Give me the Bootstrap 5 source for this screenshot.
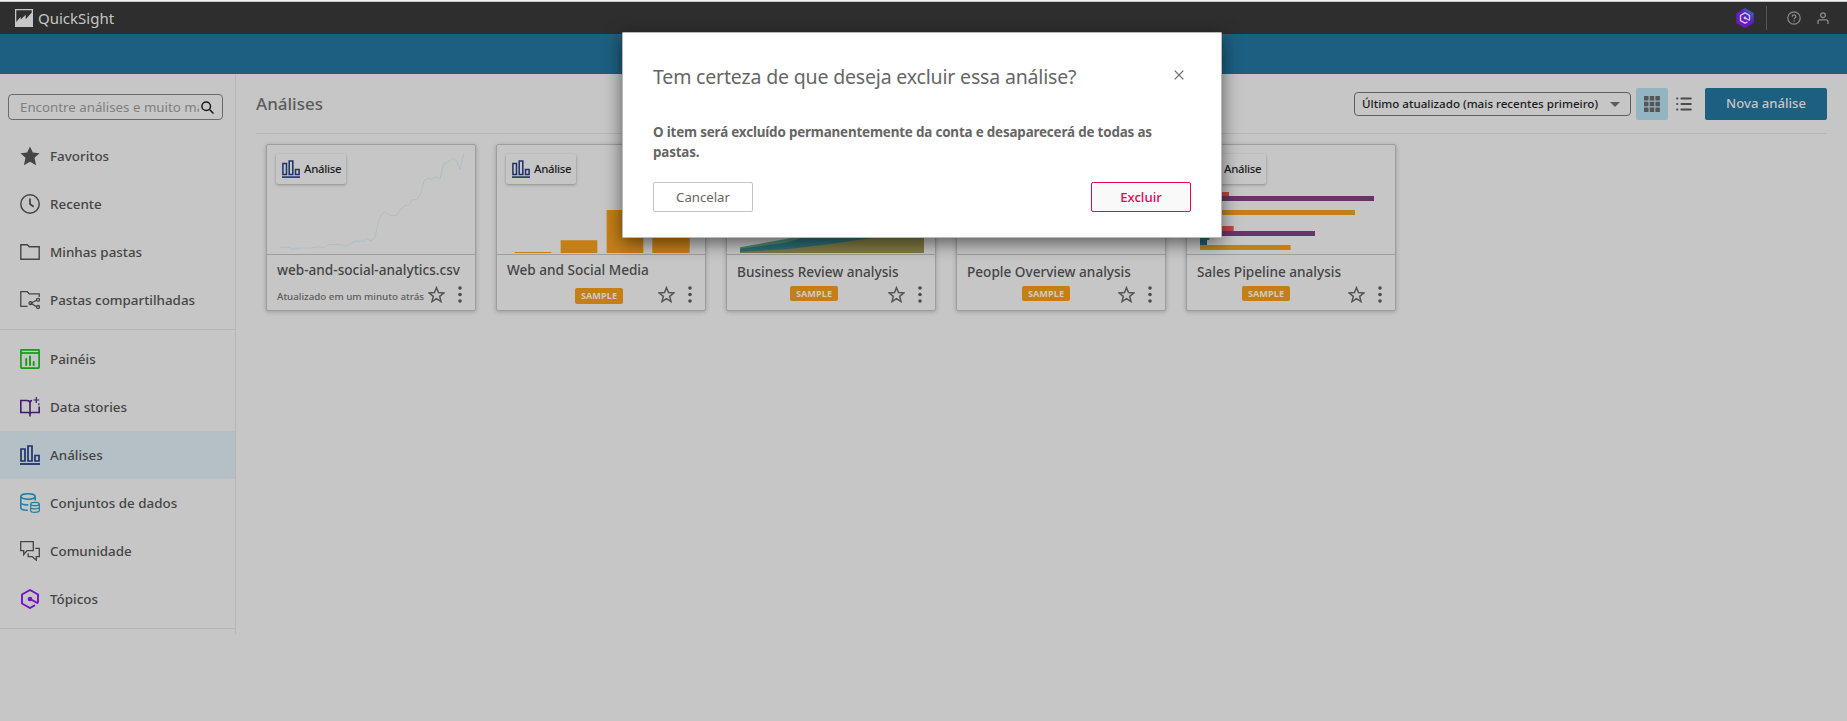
<!DOCTYPE html>
<html lang="pt-BR">
<head>
<meta charset="utf-8">
<meta name="viewport" content="width=device-width, initial-scale=1">
<title>QuickSight</title>
<link href="https://cdn.jsdelivr.net/npm/bootstrap@5.3.0/dist/css/bootstrap.min.css" rel="stylesheet">
<style>
html{overflow:hidden}
body{background:#c6c6c6;color:#454545;font-family:"Noto Sans","Open Sans",sans-serif;font-size:13.4px;height:721px;overflow:hidden}
svg{display:block;flex:none}
.topline{height:2px;background:linear-gradient(#f4f4f4 50%,#c6c6c6 50%)}
.topbar{height:32px;background:#2e2e2e;color:#c6c6c6;padding:0 18px 0 15px}
.brand{font-size:15px;line-height:32px;margin-left:5px}
.vsep{width:1px;height:24px;background:#555;margin:0 20px 0 12px}
.bluebar{height:40px;background:#1d5f80}
.side{width:236px;height:560px;border-right:1px solid #b7b7b7;padding-top:20px}
.search{width:215px;height:26px;margin:0 0 12px 8px;border:1px solid #6b6b6b;border-radius:4px;padding:0 9px 0 11px}
.search input{width:179px;height:24px;border:0;padding:0;margin-right:2px;background:transparent;outline:0;font-size:13.3px}
.search input::placeholder{color:#808080;opacity:1}
.item{height:48px;padding-left:20px;font-weight:500;color:#454545;text-decoration:none;white-space:nowrap}
.item span{margin-left:10px}
.item.active{background:#b5bfc6}
.rule{height:1px;background:#b5b5b5;margin:5px 0}
.main{padding:14px 20px 0 20px}
.head{height:32px;margin-bottom:13px}
h1{font-size:17px;font-weight:500;color:#5c5c5c;margin:0}
.sel{width:277px;height:24px;border:1px solid #5f5f5f;border-radius:4px;font-size:11.6px;font-weight:500;color:#1c1c1c;padding:0 10px 0 7px;white-space:nowrap}
.tog{width:32px;height:32px;border-radius:2px;margin-left:5px}
.tog.on{background:#93b5c1}
.newbtn{width:122px;height:32px;margin-left:5px;background:#1d5f80;color:#c6c6c6;border-radius:2px;font-weight:500;font-size:13.1px;line-height:30px;border:0;padding:0 0 2px}
.cards{padding:10px 0 0 10px;gap:20px}
.tile{width:210px;height:167px;border:1px solid #9d9d9d;border-radius:2px;box-shadow:0 1px 4px rgba(0,0,0,.22);position:relative;background:#c6c6c6}
.thumb{height:110px;border-bottom:1px solid #9d9d9d}
.chip{position:absolute;left:9px;top:9px;width:70px;height:30px;padding-left:6px;background:#c6c6c6;box-shadow:0 1px 3px rgba(0,0,0,.3);border-radius:2px;font-size:11.4px;letter-spacing:-.3px;font-weight:500;color:#1c1c1c}
.chip span{margin-left:4px}
.name{height:24px;line-height:20px;padding:5px 0 0 10px;font-size:13.6px;font-weight:500;white-space:nowrap;color:#454545}
.name.low{padding-top:7px}
.foot{height:18px;margin-top:6px;padding:0 13px 0 10px;color:#5c5c5c}
.upd{white-space:nowrap;position:relative;top:3px;font-size:9.75px;font-weight:500}
.more{margin-left:13px}
.tag{width:48px;height:15px;line-height:15px;background:#c57f17;color:#cfc9be;border-radius:2px;font-size:9.2px;font-weight:700;text-align:center;margin:-1px 0 0 55px}
.tag.t2{margin:4px 0 0 68px;height:16px;line-height:16px}
.tag.t3{margin-left:53px}
.tag.t5{margin-left:45px}
.dlg{position:absolute;left:622px;top:32px;width:600px;height:206px;background:#fff;border:1px solid #b9b9b9;box-shadow:0 5px 18px rgba(0,0,0,.55);border-radius:1px;padding:29px 30px 0;color:#666}
.dlg h2{font-size:19.5px;letter-spacing:-.17px;font-weight:400;line-height:30px;margin:0;white-space:nowrap}
.dlg p{font-weight:700;font-size:13.4px;letter-spacing:-.17px;line-height:20px;margin:30px 0 20px;white-space:nowrap}
.shut{margin:8px 7px 0 0}
.b{width:100px;height:30px;border-radius:2px;font-size:13.2px;line-height:28px;background:#fff;padding:0}
.b.no{border:1px solid #c4c4c4;color:#666}
.b.yes{border:1px solid #e90061;color:#e90061;background:#f9f9f9;font-weight:500}
</style>
</head>
<body>
<svg width="0" height="0" class="position-absolute">
<defs>
<symbol id="bars" viewBox="0 0 20 20"><path d="M1 4h4v12H1zM8 1h4v15H8zM15 10.500h4V16h-4z" fill="none" stroke="#20336b" stroke-width="1.700"/><path d="M0 19h20" stroke="#20336b" stroke-width="1.800"/></symbol>
<symbol id="star" viewBox="0 0 17 17"><path d="M8.500 1.700l2 4.900 5.300.4-4.100 3.400 1.300 5.200-4.500-2.900L4 15.600l1.300-5.200L1.200 7l5.300-.4z" fill="none" stroke="#555" stroke-width="1.500"/></symbol>
<symbol id="dots" viewBox="0 0 4 17"><circle cx="2" cy="2" r="1.800"/><circle cx="2" cy="8.500" r="1.800"/><circle cx="2" cy="15" r="1.800"/></symbol>
<linearGradient id="hx" x1="1" y1="0" x2="0.200" y2="1"><stop offset="0" stop-color="#2384cf"/><stop offset=".45" stop-color="#5a1fc0"/><stop offset="1" stop-color="#7416c4"/></linearGradient>
</defs>
</svg>
<div class="topline"></div>
<header class="topbar d-flex align-items-center">
<svg width="18" height="18" viewBox="0 0 18 18"><path d="M0 0h18v18H0z" fill="#c6c6c6"/><path d="M1.300 1.300h15.400v2.200l-6 6.800V5.800l-5 4.700-.1-2.700L1.300 13z" fill="#2e2e2e"/></svg>
<div class="brand">QuickSight</div>
<div class="ms-auto d-flex align-items-center">
<svg width="18" height="20" viewBox="0 0 18 20"><path d="M9 0l8.700 5v10L9 20 .3 15V5z" fill="url(#hx)"/><path d="M13.500 12.300V7.400L9 4.800 4.500 7.400v5.200L9 15.200l2.500-1.400M9 10l4.800 2.500" fill="none" stroke="#c9c4d8" stroke-width="1.400"/><circle cx="9" cy="10" r="1.400" fill="#c9c4d8"/></svg>
<div class="vsep"></div>
<svg width="14" height="14" viewBox="0 0 14 14" fill="none" stroke="#8c8c8c" stroke-width="1.200"><circle cx="7" cy="7" r="6.200"/><path d="M5.200 5.700c0-2.400 3.700-2.300 3.700-.2 0 1.300-1.800 1.300-1.800 2.700M7.100 9.300v1.300"/></svg>
<svg class="ms-3" width="12" height="12" viewBox="0 0 12 12" fill="none" stroke="#8c8c8c" stroke-width="1.300"><circle cx="6" cy="3.200" r="2.400"/><path d="M1 12V9.500c0-1 .6-1.600 1.600-1.600h6.800c1 0 1.600.6 1.600 1.600V12"/></svg>
</div>
</header>
<div class="bluebar"></div>
<div class="d-flex">
<nav class="side flex-shrink-0">
<div class="search d-flex align-items-center"><input type="text" placeholder="Encontre análises e muito mais">
<svg width="13" height="13" viewBox="0 0 13 13" fill="none" stroke="#1a1a1a" stroke-width="1.500"><circle cx="5.200" cy="5.200" r="4.300"/><path d="M8.300 8.300l4.200 4.200"/></svg></div>
<a class="item d-flex align-items-center"><svg width="20" height="20" viewBox="0 0 20 20"><path d="M10 .6l2.800 6 6.700.7-5 4.500 1.600 7.500L10 15.700l-6.100 3.600 1.600-7.500-5-4.500 6.700-.7z" fill="#454545"/></svg><span>Favoritos</span></a>
<a class="item d-flex align-items-center"><svg width="20" height="20" viewBox="0 0 20 20" fill="none" stroke="#454545" stroke-width="1.500"><circle cx="10" cy="10" r="9.200"/><path d="M10 4.500V10l3.700 2.700" stroke-width="1.800"/></svg><span>Recente</span></a>
<a class="item d-flex align-items-center"><svg width="20" height="20" viewBox="0 0 20 20" fill="none" stroke="#454545" stroke-width="1.400"><path d="M.8 2.700h6.500l2 2h9.900v12.600H.8z"/></svg><span>Minhas pastas</span></a>
<a class="item d-flex align-items-center"><svg width="20" height="20" viewBox="0 0 20 20" fill="none" stroke="#454545" stroke-width="1.300"><path d="M7.500 16.300H.8V1.700h6.500l2 2.200h9.900V7M16.500 10.200l-5.500 3 5.500 3.500"/><circle cx="18" cy="9.800" r="1.500"/><circle cx="10.500" cy="13.200" r="1.500"/><circle cx="18" cy="17" r="1.500"/></svg><span>Pastas compartilhadas</span></a>
<div class="rule"></div>
<a class="item d-flex align-items-center"><svg width="20" height="20" viewBox="0 0 20 20" fill="none" stroke="#169b16" stroke-width="1.700"><rect x=".9" y=".9" width="18.200" height="18.200" rx=".6"/><path d="M1 4h18"/><path d="M6.200 10v6M10 7.500v8.500M13.700 13V16" stroke-width="1.900" stroke-linecap="round"/></svg><span>Painéis</span></a>
<a class="item d-flex align-items-center"><svg width="20" height="20" viewBox="0 0 20 20" fill="none" stroke="#401a6b" stroke-width="1.600"><path d="M10 19.500v-3c-.5-.8-1.200-1-2-1H.8v-12H7c2 0 3 .9 3 2.500v10.500c.5-.8 1.200-1 2-1h7.200V9.500M10 6c0-1.500.7-2.300 2-2.500"/><path d="M16.300 0v6M13.300 3h6M18.800 6.200v2" stroke-width="1.200"/></svg><span>Data stories</span></a>
<a class="item active d-flex align-items-center"><svg width="20" height="20"><use href="#bars"/></svg><span>Análises</span></a>
<a class="item d-flex align-items-center"><svg width="20" height="20" viewBox="0 0 20 20" fill="none" stroke="#197fa8" stroke-width="1.500"><ellipse cx="8" cy="3.500" rx="7.200" ry="2.700"/><path d="M.8 3.500V15c0 1.200 3 2.200 7 2.300M15.200 3.500v4M.8 9.500c0 1.300 3 2.300 7.500 2.400"/><g stroke-width="1.200"><ellipse cx="15" cy="11" rx="4.300" ry="1.700"/><path d="M10.700 11v6.700c0 2.200 8.600 2.200 8.600 0V11M10.700 14.300c0 2.100 8.600 2.100 8.600 0"/></g></svg><span>Conjuntos de dados</span></a>
<a class="item d-flex align-items-center"><svg width="20" height="20" viewBox="0 0 20 20" fill="none" stroke="#454545" stroke-width="1.300"><path d="M.7.700h12.600v9H7l-3.300 4v-4h-3z"/><path d="M15.300 7.300h4v8.400h-3v3.500l-4-3.500H8.200v-3.500"/></svg><span>Comunidade</span></a>
<a class="item d-flex align-items-center"><svg width="20" height="20" viewBox="0 0 20 20" fill="none" stroke="#7414c4" stroke-width="1.900"><path d="M18 13.500v-8L10 1 2 5.500v9L10 19l5-2.800M10 10l8.200 4.300"/><circle cx="10" cy="10" r="1.400" fill="#7414c4"/></svg><span>Tópicos</span></a>
<div class="rule"></div>
</nav>
<main class="main flex-grow-1">
<div class="head d-flex align-items-center">
<h1>Análises</h1>
<div class="sel ms-auto d-flex align-items-center justify-content-between"><span>Último atualizado (mais recentes primeiro)</span><svg width="10" height="5" viewBox="0 0 10 5"><path d="M0 0h10L5 5z" fill="#5c5c5c"/></svg></div>
<div class="tog on d-flex align-items-center justify-content-center"><svg width="16" height="16" viewBox="0 0 16 16" fill="#555"><path d="M0 0h4.500v4.500H0zM5.700 0h4.500v4.500H5.700zM11.400 0h4.500v4.500h-4.500zM0 5.700h4.500v4.500H0zM5.700 5.700h4.500v4.500H5.700zM11.400 5.700h4.500v4.500h-4.500zM0 11.400h4.500v4.500H0zM5.700 11.400h4.500v4.500H5.700zM11.400 11.400h4.500v4.500h-4.500z"/></svg></div>
<div class="tog m-0 d-flex align-items-center justify-content-center"><svg width="16" height="14" viewBox="0 0 16 14" stroke="#4c4c4c" stroke-width="2.200" stroke-linecap="round"><path d="M1.200 1.500h.1M1.200 7h.1M1.200 12.500h.1M5.500 1.500h9.200M5.500 7h9.200M5.500 12.500h9.200"/></svg></div>
<button class="newbtn">Nova análise</button>
</div>
<div class="rule m-0"></div>
<div class="cards d-flex">
<div class="tile">
<div class="thumb"><svg width="208" height="109" viewBox="81 195 624 327"><path d="M122 502h25l12 7 15-5h37l20-3h12l8 3 12-10h40l8 3h10l14-8 8-5h26l12-9 12 8 10-9 4-11 7-38 10-20 10-10 12 9 12 3h12l12-18 12-13h12l12-17h12l12-18 10-38 12-8 12 3 12-8 12 7 11-46 12-4 14-12 12 7 11 26 11-47" fill="none" stroke="#a9bdc4" stroke-width="2.700"/></svg></div>
<div class="chip d-flex align-items-center"><svg width="18" height="18"><use href="#bars"/></svg><span>Análise</span></div>
<div class="name">web-and-social-analytics.csv</div>
<div class="foot d-flex align-items-center"><span class="upd">Atualizado em um minuto atrás</span><svg class="ms-auto" width="17" height="17"><use href="#star"/></svg><svg class="more" width="4" height="17" fill="#4c4c4c"><use href="#dots"/></svg></div>
</div>
<div class="tile">
<div class="thumb"><svg width="208" height="109" viewBox="51 45 624 327" fill="#c57f17"><path d="M104 366h110v3H104zM242 331h110v38H242zM380 240h110v129H380zM517 300h112v69H517z"/></svg></div>
<div class="chip d-flex align-items-center"><svg width="18" height="18"><use href="#bars"/></svg><span>Análise</span></div>
<div class="name">Web and Social Media</div>
<div class="foot d-flex align-items-center"><div class="tag t2">SAMPLE</div><svg class="ms-auto" width="17" height="17"><use href="#star"/></svg><svg class="more" width="4" height="17" fill="#4c4c4c"><use href="#dots"/></svg></div>
</div>
<div class="tile">
<div class="thumb"><svg width="208" height="109" viewBox="51 -225 624 327"><path d="M90 82L228 57l80-20h334v62H90z" fill="#4d8f72"/><path d="M90 86l138-18 100-30h314v61H90z" fill="#2b7079"/><path d="M90 95l138-7 138-17 120-17 156-20v65H90z" fill="#807b42"/></svg></div>
<div class="name low">Business Review analysis</div>
<div class="foot d-flex align-items-center"><div class="tag t3">SAMPLE</div><svg class="ms-auto" width="17" height="17"><use href="#star"/></svg><svg class="more" width="4" height="17" fill="#4c4c4c"><use href="#dots"/></svg></div>
</div>
<div class="tile">
<div class="thumb"></div>
<div class="name low">People Overview analysis</div>
<div class="foot d-flex align-items-center"><div class="tag">SAMPLE</div><svg class="ms-auto" width="17" height="17"><use href="#star"/></svg><svg class="more" width="4" height="17" fill="#4c4c4c"><use href="#dots"/></svg></div>
</div>
<div class="tile">
<div class="thumb"><svg width="208" height="109" viewBox="81 45 624 327"><path d="M120 186h87v13h-87zM120 288h101v15H120z" fill="#c5453f"/><path d="M120 198h522v15H120zM120 303h345v15H120z" fill="#683468"/><path d="M120 240h465v15H120zM120 345h272v15H120z" fill="#c57f17"/><path d="M120 318h28v12h-28z" fill="#14814f"/><path d="M120 330h21v15h-21z" fill="#1d5f80"/></svg></div>
<div class="chip d-flex align-items-center"><svg width="18" height="18"><use href="#bars"/></svg><span>Análise</span></div>
<div class="name low">Sales Pipeline analysis</div>
<div class="foot d-flex align-items-center"><div class="tag t5">SAMPLE</div><svg class="ms-auto" width="17" height="17"><use href="#star"/></svg><svg class="more" width="4" height="17" fill="#4c4c4c"><use href="#dots"/></svg></div>
</div>
</div>
</main>
</div>
<div class="dlg" role="dialog">
<div class="d-flex"><h2>Tem certeza de que deseja excluir essa análise?</h2><svg class="shut ms-auto" width="10" height="10" viewBox="0 0 10 10" stroke="#666" stroke-width="1.200"><path d="M.7.700l8.600 8.600M9.300.7L.7 9.300"/></svg></div>
<p>O item será excluído permanentemente da conta e desaparecerá de todas as<br>pastas.</p>
<div class="d-flex justify-content-between"><button class="b no">Cancelar</button><button class="b yes">Excluir</button></div>
</div>
<script src="https://cdn.jsdelivr.net/npm/bootstrap@5.3.0/dist/js/bootstrap.bundle.min.js"></script>
</body>
</html>
